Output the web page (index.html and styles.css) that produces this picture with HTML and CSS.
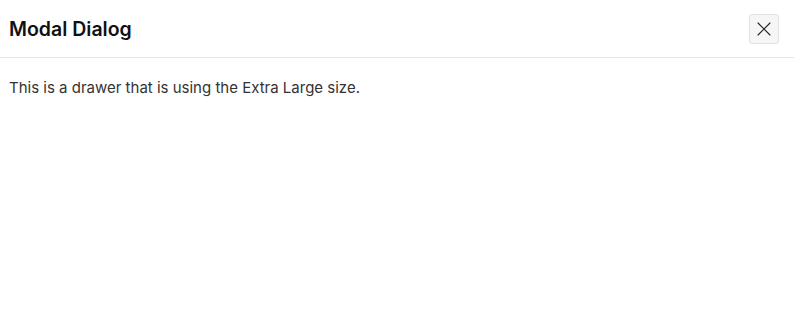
FILE: index.html
```html
<!DOCTYPE html>
<html lang="en">

<head>
    <meta charset="UTF-8">
    <meta name="viewport" content="width=device-width, initial-scale=1.0">
    <title>Modal Dialog</title>
    <link rel="stylesheet" href="styles.css">
</head>

<body>
    <div class="drawer">
        <!-- Header -->
        <div class="drawer-header">
            <h1 class="drawer-title">Modal Dialog</h1>
            <button class="close-btn" aria-label="Close">
                <svg width="14" height="14" viewBox="0 0 14 14">
                    <path d="M1 1L13 13M13 1L1 13" stroke="#222" stroke-width="1.1" fill="none" stroke-linecap="round" />
                </svg>
            </button>
        </div>

        <!-- Body -->
        <div class="drawer-body">
            <p>This is a drawer that is using the Extra Large size.</p>
        </div>
    </div>
</body>

</html>
```

FILE: styles.css
```css
body {
    margin: 0;
    font-family: Inter, "Noto Sans", Arial, sans-serif;
    background-color: #fff;
    color: #333;
}

.drawer {
    width: 100%;
}

.drawer-header {
    display: flex;
    align-items: center;
    justify-content: space-between;
    height: 57px;
    padding: 0 15px 0 9px;
    border-bottom: 1px solid #e6e6e6;
}

.drawer-title {
    margin: 0;
    font-size: 19.5px;
    font-weight: 600;
    color: #111;
}

.close-btn {
    display: flex;
    align-items: center;
    justify-content: center;
    width: 30px;
    height: 30px;
    padding: 0;
    background-color: #f6f6f6;
    border: 1px solid #e2e2e2;
    border-radius: 3px;
    cursor: pointer;
}

.drawer-body {
    padding: 19px 9px;
}

.drawer-body p {
    margin: 0;
    font-size: 15px;
    line-height: 22px;
}
```
